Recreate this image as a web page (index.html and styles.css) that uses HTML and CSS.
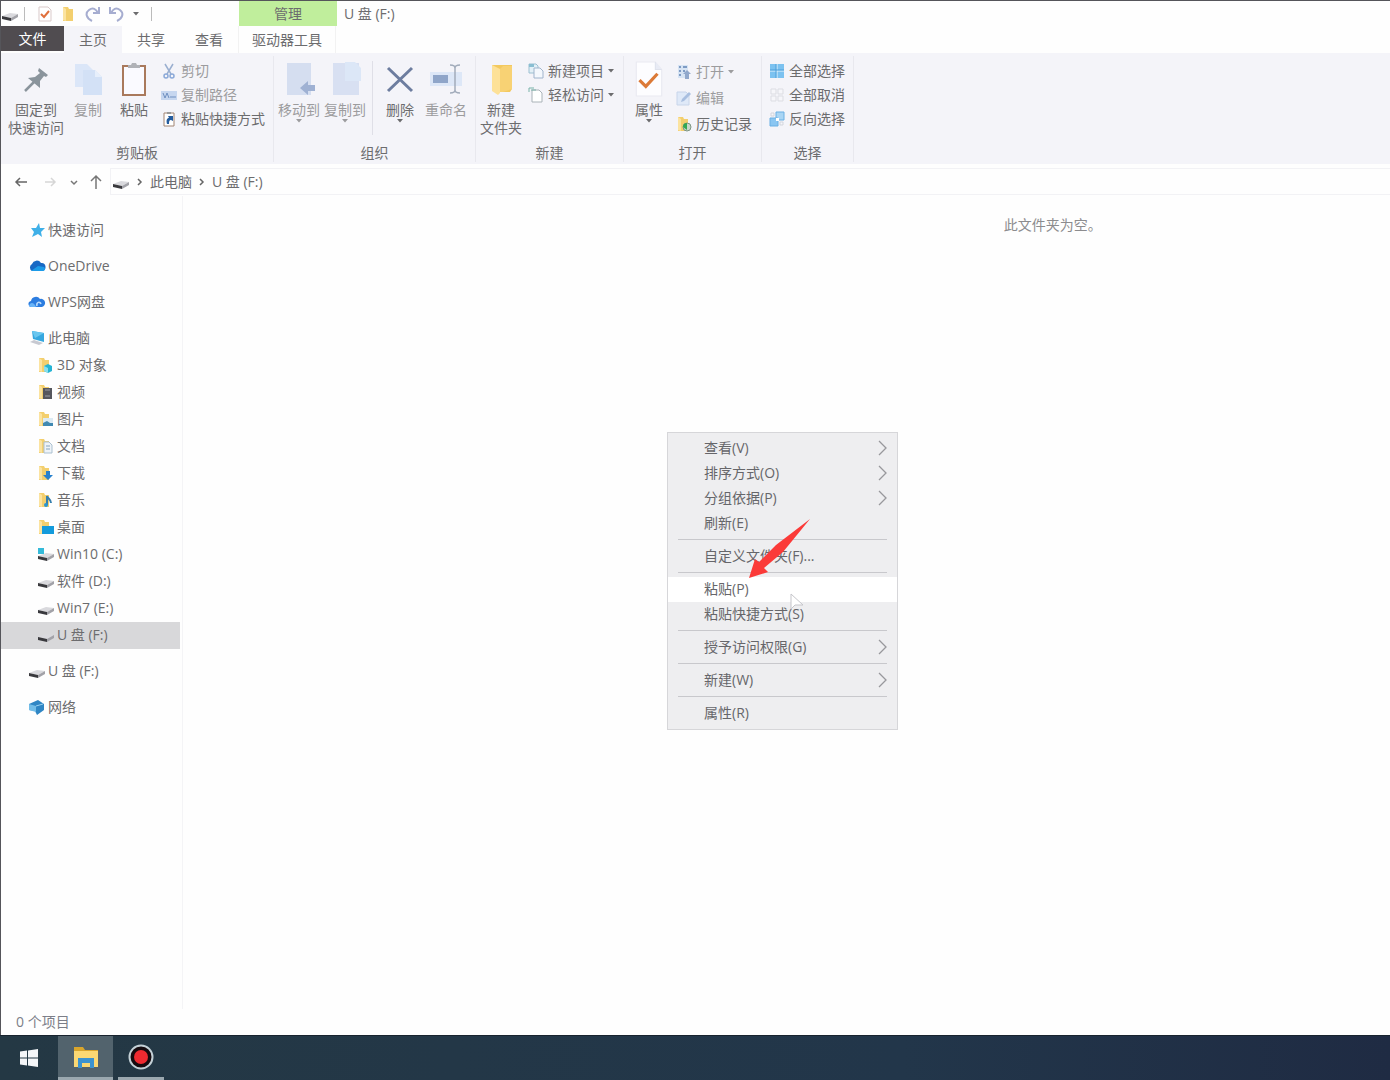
FILE: index.html
```html
<!DOCTYPE html>
<html lang="zh-CN">
<head>
<meta charset="utf-8">
<title>U 盘 (F:)</title>
<link rel="stylesheet" href="styles.css">
</head>
<body>
<svg class="defs" aria-hidden="true">
  <symbol id="drive" viewBox="0 0 18 16"><path d="M1 10 9 7l8 1-7 4z" fill="#d9d9dd"/><path d="M1 10l9 2v3l-9-2z" fill="#39393d"/><path d="M10 12l7-4v3l-7 4z" fill="#a2a2a8"/></symbol>
  <symbol id="folder" viewBox="0 0 16 16"><path d="M2 1h5l1 2h4v12H2z" fill="#f3cf6e"/><path d="M2 1l3 2v12l-3-1z" fill="#fbe3a0"/></symbol>
  <symbol id="check" viewBox="0 0 28 34"><path d="M2 1h18l6 7v25H2z" fill="#fdfdff" stroke="#e9eaf1"/><path d="M20 1v7h6" fill="#e8ebf5" stroke="#dfe2ec"/><path d="M5 18l6 6L22 12" fill="none" stroke="#dc7a38" stroke-width="3"/></symbol>
  <symbol id="bigfolder" viewBox="0 0 28 36"><path d="M5 4h20v24l-2 3H9z" fill="#f3c95f"/><path d="M5 4l8 4v24l-2 2-6-4z" fill="#fde198"/><path d="M13 8l3-3h9v23l-9 3h-3z" fill="#f8d274"/></symbol>
  <symbol id="chev" viewBox="0 0 10 16"><path d="M1 1l7 7-7 7" fill="none" stroke="currentColor" stroke-width="1.3"/></symbol>
  <symbol id="caret" viewBox="0 0 6 4"><path d="M0 0h6L3 3.500z" fill="currentColor"/></symbol>
</svg>

<div class="window">
  <header>
    <div class="titlebar">
      <div class="quick">
        <svg class="i18"><use href="#drive"/></svg>
        <span class="bar"></span>
        <button aria-label="属性"><svg class="i16" viewBox="0 0 16 16"><path d="M2 1h9l3 3v11H2z" fill="#fff" stroke="#d9c9c9"/><path d="M4 8l3 3 5-6" fill="none" stroke="#e0703c" stroke-width="2"/></svg></button>
        <button aria-label="新建文件夹"><svg class="i16"><use href="#folder"/></svg></button>
        <button aria-label="恢复"><svg class="i16" viewBox="0 0 16 16"><path d="M7 15C1 12 0 7 4 4s7-1 9 3M14 1v6H8" fill="none" stroke="#a6add0" stroke-width="2"/></svg></button>
        <button aria-label="撤消"><svg class="i16" viewBox="0 0 16 16"><path d="M8 15c6-3 7-8 3-11S4 3 2 7M1 1v6h6" fill="none" stroke="#a6add0" stroke-width="2"/></svg></button>
        <button aria-label="自定义快速访问工具栏"><svg class="caret"><use href="#caret"/></svg></button>
        <span class="bar"></span>
      </div>
      <div class="manage">管理</div>
      <h1>U 盘 (F:)</h1>
    </div>
    <nav class="tabs">
      <button class="file">文件</button>
      <button class="active">主页</button>
      <button>共享</button>
      <button>查看</button>
      <button class="tools">驱动器工具</button>
    </nav>
  </header>

  <section class="ribbon">
    <div class="group">
      <div class="tray first">
        <button class="big wide"><svg viewBox="0 0 32 36"><path d="M19 7l9 7-2 2-2-1-4 5v7L8 17l7-1 5-4-2-2z" fill="#8a949c"/><path d="M15 20L5 30" stroke="#8a949c" stroke-width="2.500"/></svg>固定到<br>快速访问</button>
        <button class="big off"><svg viewBox="0 0 32 36"><path d="M3 3h12l6 6v17H3z" fill="#dbe6f8"/><path d="M11 9h12l7 7v18H11z" fill="#d3e1f6"/><path d="M23 9v7h7" fill="#e7effb"/></svg>复制</button>
        <button class="big"><svg viewBox="0 0 32 36"><rect x="5" y="5" width="22" height="29" fill="#fafaff" stroke="#a9795c" stroke-width="2"/><path d="M10 7V4h3l1-2h4l1 2h3v3z" fill="#b0b2b7"/></svg>粘贴</button>
        <div class="stack">
          <button class="off"><svg class="i16" viewBox="0 0 16 16"><path d="M4 1l6 10M12 1L6 11" stroke="#9aafd0" stroke-width="1.500"/><circle cx="5" cy="13" r="2" fill="none" stroke="#8ba9d8" stroke-width="1.500"/><circle cx="11" cy="13" r="2" fill="none" stroke="#8ba9d8" stroke-width="1.500"/></svg>剪切</button>
          <button class="off"><svg class="i16" viewBox="0 0 16 16"><path d="M0 4h16v9H0z" fill="#c6d6ef"/><path d="M2 6l2 5 2-5 2 5M9 10h6" fill="none" stroke="#6f8fc0"/></svg>复制路径</button>
          <button><svg class="i16" viewBox="0 0 16 16"><path d="M3 2h10v13H3z" fill="#fff" stroke="#a18472"/><path d="M6 1h4v2H6z" fill="#999"/><path d="M6 13c-1-4 0-6 2-6L7 5h5v5l-2-1c-2 0-2 2-2 4z" fill="#245c9e"/></svg>粘贴快捷方式</button>
        </div>
      </div>
      <div class="caption">剪贴板</div>
    </div>
    <div class="group">
      <div class="tray">
        <button class="big off"><svg viewBox="0 0 32 36"><path d="M4 2h24v32H4z" fill="#d5def0"/><path d="M17 27l8-7v4h8v6h-8v4z" fill="#9fb1d3"/></svg>移动到<svg class="caret"><use href="#caret"/></svg></button>
        <button class="big off"><svg viewBox="0 0 32 36"><path d="M4 2h26v32H4z" fill="#d8e0f2"/><path d="M16 1h10l6 6v13H16z" fill="#dce7f7"/></svg>复制到<svg class="caret"><use href="#caret"/></svg></button>
        <span class="rule"></span>
        <button class="big"><svg viewBox="0 0 32 36"><path d="M4 7l24 23M28 7L4 30" stroke="#6d7d9f" stroke-width="3"/></svg>删除<svg class="caret"><use href="#caret"/></svg></button>
        <button class="big off"><svg viewBox="0 0 32 36"><path d="M0 11h32v14H0z" fill="#dde7f7"/><path d="M3 14h15v8H3z" fill="#8fa5c9"/><path d="M20 4c4 0 5 1 5 3v22c0 2-1 3-5 3M30 4c-4 0-5 1-5 3M25 29c0 2 1 3 5 3" fill="none" stroke="#a2acbb" stroke-width="1.500"/></svg>重命名</button>
      </div>
      <div class="caption">组织</div>
    </div>
    <div class="group new">
      <div class="tray">
        <button class="big"><svg><use href="#bigfolder"/></svg>新建<br>文件夹</button>
        <div class="stack">
          <button><svg class="i16" viewBox="0 0 16 16"><path d="M1 1h7l2 2v7H1z" fill="#e3f0f7" stroke="#9cc0d1"/><path d="M6 5h6l3 3v7H6z" fill="#f4f8fd" stroke="#a0b4cc"/><path d="M1 1h5v3H1z" fill="#8abed2"/></svg>新建项目<svg class="caret"><use href="#caret"/></svg></button>
          <button><svg class="i16" viewBox="0 0 16 16"><path d="M4 3h7l3 3v9H4z" fill="#fff" stroke="#a9b2b8"/><path d="M1 5V1h5M3 3h5" fill="none" stroke="#79b3a9"/></svg>轻松访问<svg class="caret"><use href="#caret"/></svg></button>
        </div>
      </div>
      <div class="caption">新建</div>
    </div>
    <div class="group open">
      <div class="tray">
        <button class="big"><svg><use href="#check"/></svg>属性<svg class="caret"><use href="#caret"/></svg></button>
        <div class="stack loose">
          <button class="off"><svg class="i16" viewBox="0 0 16 16"><path d="M2 1h10v13H2z" fill="#d7e4f4"/><path d="M3 3h2M3 7h2M3 11h2M7 3h4M7 7h2" stroke="#7e9bc4" stroke-width="2"/><path d="M11 6l4 4h-2v5H9v-5H7z" fill="#91a8cc"/></svg>打开<svg class="caret"><use href="#caret"/></svg></button>
          <button class="off"><svg class="i16" viewBox="0 0 16 16"><path d="M1 2h9l3 3v10H1z" fill="#dfe9f8" stroke="#c8d5ea"/><path d="M5 12l1-3 7-7 2 2-7 7z" fill="#a9bfe0"/></svg>编辑</button>
          <button><svg class="i16" viewBox="0 0 16 16"><use href="#folder"/><circle cx="11" cy="11" r="4" fill="#c9d7cb" stroke="#7e9583"/><path d="M11 7a4 4 0 0 0-4 4l4 3z" fill="#34a853"/></svg>历史记录</button>
        </div>
      </div>
      <div class="caption">打开</div>
    </div>
    <div class="group select">
      <div class="tray">
        <div class="stack">
          <button><svg class="i16" viewBox="0 0 16 16"><path d="M1 1h14v14H1z" fill="#7cc2f0"/><path d="M8 1v14M1 8h14" stroke="#e4f2fb" stroke-width="1"/><path d="M7 1v14M1 7h14" stroke="#4c9fda" stroke-width="1"/></svg>全部选择</button>
          <button><svg class="i16" viewBox="0 0 16 16"><path d="M2 2h5v5H2zM9 2h5v5H9zM2 9h5v5H2zM9 9h5v5H9z" fill="#f6f6fa" stroke="#dcdde3"/></svg>全部取消</button>
          <button><svg class="i16" viewBox="0 0 16 16"><path d="M7 1h8v8H7z" fill="#a9d5f4" stroke="#6bb0e4"/><path d="M1 7h8v8H1z" fill="#8ac6f2" stroke="#6bb0e4"/><path d="M2 2h3v3H2zM11 11h3v3h-3z" fill="#f6f6fa" stroke="#d2d5dd"/><path d="M7 7h3v3H7z" fill="#fff"/></svg>反向选择</button>
        </div>
      </div>
      <div class="caption">选择</div>
    </div>
  </section>

  <nav class="address">
    <button aria-label="后退"><svg class="i16" viewBox="0 0 16 16"><path d="M14 8H3M7 4L3 8l4 4" fill="none" stroke="#666" stroke-width="1.500"/></svg></button>
    <button aria-label="前进"><svg class="i16" viewBox="0 0 16 16"><path d="M3 8h10M9 4l4 4-4 4" fill="none" stroke="#d6d6d6" stroke-width="1.500"/></svg></button>
    <button class="slim" aria-label="最近浏览的位置"><svg class="i8" viewBox="0 0 8 8"><path d="M1 3l3 3 3-3" fill="none" stroke="#777" stroke-width="1.500"/></svg></button>
    <button class="up" aria-label="向上"><svg class="i16" viewBox="0 0 16 16"><path d="M8 15V2M3 7l5-5 5 5" fill="none" stroke="#777" stroke-width="1.500"/></svg></button>
    <div class="crumbs">
      <svg class="i18"><use href="#drive"/></svg>
      <svg class="sep" viewBox="0 0 8 8"><path d="M2 1l3 3-3 3" fill="none" stroke="#666" stroke-width="1.500"/></svg>
      <a href="#">此电脑</a>
      <svg class="sep" viewBox="0 0 8 8"><path d="M2 1l3 3-3 3" fill="none" stroke="#666" stroke-width="1.500"/></svg>
      <a href="#">U 盘 (F:)</a>
    </div>
  </nav>

  <div class="body">
    <nav class="side">
      <a class="top" href="#"><svg class="i18" viewBox="0 0 18 16"><path d="M11 1l1 5h5l-4 4 1 5-4-3-6 3 2-5-3-4h5z" fill="#3fb0e8"/></svg>快速访问</a>
      <a class="top" href="#"><svg class="i18" viewBox="0 0 18 16"><path d="M4 13a4 4 0 0 1 0-7 5 5 0 0 1 9-1 4 4 0 0 1 1 8z" fill="#1768c4"/><path d="M3 13l7-5 6 1c2 2 1 4-2 4z" fill="#1c9be8"/></svg>OneDrive</a>
      <a class="top" href="#"><svg class="i18" viewBox="0 0 18 16"><path d="M4 13a3 3 0 0 1-1-6 5 5 0 0 1 9-2 4 4 0 0 1 2 8z" fill="#2c7de0"/><path d="M1 12c1-4 5-4 7 1H3z" fill="#69b4f7"/><path d="M9 12c-1-4 3-5 4-2" fill="none" stroke="#b9dbfb" stroke-width="1.500"/></svg>WPS网盘</a>
      <a class="top" href="#"><svg class="i18" viewBox="0 0 18 16"><path d="M4 1l12 2v9L5 9z" fill="#35a7df"/><path d="M4 1l12 2-9 5z" fill="#68c6ef"/><path d="M2 12l4-2 9 3-4 2z" fill="#c7c9d1"/></svg>此电脑</a>
      <div class="children">
        <a href="#"><svg class="i18" viewBox="0 0 18 16"><use href="#folder" width="16" height="16"/><path d="M7 9l4-2 4 2v5l-4 2-4-2z" fill="#25b4d4"/><path d="M7 9l4 2v5l-4-2z" fill="#89dfed"/></svg>3D 对象</a>
        <a href="#"><svg class="i18" viewBox="0 0 18 16"><use href="#folder" width="16" height="16"/><path d="M6 4h9v11H6z" fill="#55565d"/><path d="M8 6h5M8 12h5" stroke="#9b9ca4"/></svg>视频</a>
        <a href="#"><svg class="i18" viewBox="0 0 18 16"><use href="#folder" width="16" height="16"/><path d="M6 7h10v8H6z" fill="#dcebf4"/><path d="M6 12l4-2 3 2h3v3H6z" fill="#4189b2"/></svg>图片</a>
        <a href="#"><svg class="i18" viewBox="0 0 18 16"><use href="#folder" width="16" height="16"/><path d="M7 4h5l3 3v8H7z" fill="#eef3f8" stroke="#abc0d0"/><path d="M9 8h4M9 11h4" stroke="#86a5bd"/></svg>文档</a>
        <a href="#"><svg class="i18" viewBox="0 0 18 16"><use href="#folder" width="16" height="16"/><path d="M9 6h4v4h3l-5 5-5-5h3z" fill="#2881cd"/></svg>下载</a>
        <a href="#"><svg class="i18" viewBox="0 0 18 16"><use href="#folder" width="16" height="16"/><path d="M10 13V4c1 3 4 3 4 7" fill="none" stroke="#357fae" stroke-width="2"/><circle cx="9" cy="13" r="2" fill="#2b95cf"/></svg>音乐</a>
        <a href="#"><svg class="i18" viewBox="0 0 18 16"><use href="#folder" width="16" height="16"/><path d="M5 7h12v8H5z" fill="#149bdc"/></svg>桌面</a>
        <a href="#"><svg class="i18" viewBox="0 0 18 16"><use href="#drive"/><path d="M1 2h6v6H1z" fill="#34bad9"/></svg>Win10 (C:)</a>
        <a href="#"><svg class="i18"><use href="#drive"/></svg>软件 (D:)</a>
        <a href="#"><svg class="i18"><use href="#drive"/></svg>Win7 (E:)</a>
        <a class="current" href="#"><svg class="i18"><use href="#drive"/></svg>U 盘 (F:)</a>
      </div>
      <a class="top" href="#"><svg class="i18"><use href="#drive"/></svg>U 盘 (F:)</a>
      <a class="top" href="#"><svg class="i18" viewBox="0 0 18 16"><path d="M1 5l9-4 6 4v6l-7 5-2-4-6-1z" fill="#2f86c4"/><path d="M1 5l7 2v6l-7-2z" fill="#72bde8"/><path d="M8 7l7-2" stroke="#9bd3f2"/></svg>网络</a>
    </nav>
    <main><p class="empty">此文件夹为空。</p></main>
  </div>
  <footer class="status">0 个项目</footer>
</div>

<div class="menu" role="menu">
  <button role="menuitem">查看(V)<svg><use href="#chev"/></svg></button>
  <button role="menuitem">排序方式(O)<svg><use href="#chev"/></svg></button>
  <button role="menuitem">分组依据(P)<svg><use href="#chev"/></svg></button>
  <button role="menuitem">刷新(E)</button>
  <hr>
  <button role="menuitem">自定义文件夹(F)...</button>
  <hr>
  <button role="menuitem" class="hover">粘贴(P)</button>
  <button role="menuitem">粘贴快捷方式(S)</button>
  <hr>
  <button role="menuitem">授予访问权限(G)<svg><use href="#chev"/></svg></button>
  <hr>
  <button role="menuitem">新建(W)<svg><use href="#chev"/></svg></button>
  <hr>
  <button role="menuitem">属性(R)</button>
  <svg class="pointer" viewBox="0 0 62 60"><path d="M61 0L27 26 10 43 6 40 0 59 19 53 15 49 34 33z" fill="#fb3a38"/></svg>
  <svg class="cursor" viewBox="0 0 14 18"><path d="M1 1v15l4-4h8z" fill="#fff" stroke="#c5c5ca"/></svg>
</div>

<div class="taskbar">
  <button class="start" aria-label="开始"><svg viewBox="0 0 18 18"><path d="M0 2.500l7-1v7H0zM8 1.400L18 0v8.500H8zM0 9.500h7v7l-7-1zM8 9.500h10V18L8 16.600z" fill="#f4f6f8"/></svg></button>
  <button class="task focused" aria-label="文件资源管理器"><svg viewBox="0 0 26 24"><path d="M1 2h9l2 3h13v17H1z" fill="#d9a52c"/><path d="M1 6h24v16H1z" fill="#fbd873"/><path d="M5 23V13h16v10h-4v-5H9v5z" fill="#3c93cf"/></svg></button>
  <button class="task" aria-label="录屏"><svg viewBox="0 0 26 26"><circle cx="13" cy="13" r="11.500" fill="#160b0f" stroke="#c3d0d6" stroke-width="2"/><circle cx="13" cy="13" r="7" fill="#ee2a30"/></svg></button>
</div>
</body>
</html>
```
FILE: styles.css
```css
* { box-sizing: border-box; }

body {
  margin: 0;
  min-height: 100vh;
  display: flex;
  flex-direction: column;
  position: relative;
  background: #fefefe;
  color: #6c6c6e;
  font: 14px/18px "Open Sans", "Noto Sans CJK SC", sans-serif;
}

.defs { position: absolute; width: 0; height: 0; }

button {
  border: 0;
  padding: 0;
  background: none;
  color: inherit;
  font: inherit;
}

a { color: inherit; text-decoration: none; }
svg { flex: none; }
.i8 { width: 8px; height: 8px; }
.i16 { width: 16px; height: 16px; }
.i18 { width: 18px; height: 16px; }
.caret { width: 6px; height: 4px; }

.window {
  flex: 1;
  display: flex;
  flex-direction: column;
  border-top: 1px solid #55555a;
  border-left: 1px solid #55555a;
}

/* Title bar and tabs */
.titlebar { display: flex; height: 25px; }

.quick {
  width: 238px;
  display: flex;
  align-items: center;
  gap: 8px;
}
.quick button { display: flex; }
.quick > svg { margin-right: -3px; }
.bar { width: 1px; height: 14px; background: #bbb; }
.bar:last-child { margin-left: 4px; }
.quick .bar + button { margin-left: 4px; }

.manage {
  width: 98px;
  background: #c0ee9c;
  line-height: 26px;
  text-align: center;
}

h1 {
  margin: 0 0 0 7px;
  font-size: 14px;
  font-weight: 400;
  line-height: 26px;
}

.tabs { display: flex; height: 27px; }
.tabs button { width: 58px; }
.tabs .file {
  height: 25px;
  width: 63px;
  background: #504c50;
  color: #fff;
}
.tabs .active { background: #f4f4f9; }
.tabs .tools {
  width: 98px;
  border-left: 1px solid #f2f2f2;
  border-right: 1px solid #f2f2f2;
}

/* Ribbon */
.ribbon {
  display: flex;
  height: 111px;
  padding: 3px 0 2px;
  background: #f4f4f9;
}

.group {
  display: flex;
  flex-direction: column;
  justify-content: space-between;
  padding-top: 5px;
  border-right: 1px solid #e8e8ee;
}
.group .tray { padding: 0 6px 0 2px; }
.group .first { padding: 0 8px 0 6px; }
.new .tray { padding-right: 9px; }
.open .tray { padding-right: 9px; }
.select .tray { padding: 0 8px 0 7px; }

.tray { display: flex; }

.big {
  width: 46px;
  display: flex;
  flex-direction: column;
  align-items: center;
  align-self: flex-start;
  white-space: nowrap;
}
.big svg { width: 32px; height: 36px; margin-bottom: 4px; }
.big .caret { width: 6px; height: 4px; margin: 0; }
.wide { width: 58px; }
.off { color: #9c9c9e; }
.rule { width: 1px; margin: 0 4px; background: #dfdfe7; height: 74px; }

.stack {
  display: flex;
  flex-direction: column;
  margin-left: 4px;
}
.select .stack { margin-left: 0; }
.stack button {
  display: flex;
  align-items: center;
  gap: 4px;
  height: 24px;
  margin-top: -2px;
  margin-bottom: 2px;
  white-space: nowrap;
}
.loose button { height: 26px; }

.caption { text-align: center; }

/* Address bar */
.address {
  display: flex;
  align-items: center;
  height: 32px;
  padding: 4px 0 1px 12px;
}
.address button { display: flex; margin-right: 13px; }
.address .slim { margin-right: 10px; margin-left: -1px; }
.address .up { margin-right: 6px; }
.crumbs {
  flex: 1;
  display: flex;
  align-items: center;
  gap: 6px;
  height: 27px;
  padding-left: 1px;
  border: 1px solid #f2f2f5;
  border-right: 0;
}
.sep { width: 8px; height: 8px; }

/* Navigation pane and content */
.body { flex: 1; display: flex; }

.side {
  width: 182px;
  display: flex;
  flex-direction: column;
  gap: 9px;
  padding: 21px 2px 0 0;
  border-right: 1px solid #f4f4f6;
}
.side a {
  display: flex;
  align-items: center;
  gap: 2px;
  height: 27px;
  padding: 0 0 2px 36px;
}
.side .top { padding-left: 27px; }
.side .top:has(+ .children) { margin-bottom: -9px; }
.side .current { background: #d8d8da; }

main { flex: 1; padding-top: 20px; }
.empty { margin: 0 0 0 68%; color: #8c8c8e; }

.status { padding: 4px 15px; color: #7c7e88; height: 26px; }

/* Context menu */
.menu {
  position: absolute;
  left: 667px;
  top: 432px;
  width: 231px;
  display: flex;
  flex-direction: column;
  padding: 3px 0;
  border: 1px solid #d6d6d9;
  background: #eeeef0;
  color: #66666a;
}
.menu button {
  display: flex;
  justify-content: space-between;
  align-items: center;
  height: 25px;
  padding: 0 9px 2px 36px;
}
.menu button svg { width: 10px; height: 16px; color: #98989c; }
.menu .hover { background: #fff; }
.menu hr {
  width: 209px;
  height: 1px;
  margin: 3px 0 4px 10px;
  border: 0;
  background: #c8c8cc;
}
.pointer { position: absolute; left: 81px; top: 86px; width: 62px; height: 60px; }
.cursor { position: absolute; left: 122px; top: 160px; width: 14px; height: 18px; }

/* Taskbar */
.taskbar {
  display: flex;
  height: 45px;
  border-top: 1px solid #18232e;
  background: linear-gradient(90deg, #243844, #22364a 65%, #1f2b43);
}
.taskbar button {
  display: flex;
  align-items: center;
  justify-content: center;
}
.start { width: 57px; }
.start svg { width: 18px; height: 18px; }
.task { width: 46px; margin-left: 5px; border-bottom: 3px solid #9ba8af; }
.task svg { width: 26px; height: 26px; }
.focused { width: 55px; margin-left: 1px; background: #52636d; }
```
